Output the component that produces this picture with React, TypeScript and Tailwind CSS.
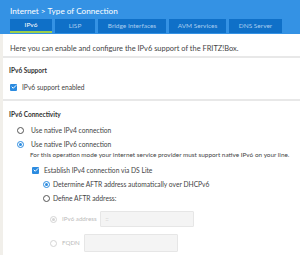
import { Check } from 'lucide-react'

const tabs = [
  { name: 'IPv6', w: 'w-[42px]', active: true },
  { name: 'LISP', w: 'w-[40px]' },
  { name: 'Bridge Interfaces', w: 'w-[68px]' },
  { name: 'AVM Services', w: 'w-[57px]' },
  { name: 'DNS Server', w: 'w-[53px]' },
]

function Checkbox() {
  return (
    <span className="w-[7px] h-[7px] rounded-[1px] bg-[#2b8be0] flex items-center justify-center shrink-0">
      <Check className="w-[6px] h-[6px] text-white" strokeWidth={4} />
    </span>
  )
}

function Radio({ on, disabled }: { on?: boolean; disabled?: boolean }) {
  return (
    <span
      className={`w-[7px] h-[7px] rounded-full border flex items-center justify-center shrink-0 ${
        disabled ? 'border-[#d4d4d4]' : on ? 'border-[#2b8be0]' : 'border-[#555]'
      }`}
    >
      {on && <span className={`w-[3px] h-[3px] rounded-full ${disabled ? 'bg-[#d4d4d4]' : 'bg-[#2b8be0]'}`} />}
    </span>
  )
}

export default function App() {
  return (
    <div className="w-[300px] h-[255px] overflow-hidden bg-[#f1efea] font-['Lato',sans-serif] text-[6.7px] text-[#444]">
      {/* Header */}
      <div className="bg-[#3492e4] h-[34px] pt-[6px]">
        <div className="px-[10px] text-white text-[8.2px] leading-[10px]">Internet &gt; Type of Connection</div>
        <div className="flex gap-[3px] pl-[10px] mt-[3px]">
          {tabs.map((t) => (
            <div
              key={t.name}
              className={`${t.w} h-[14px] bg-[#0f70c8] flex items-center justify-center text-[6.5px] ${
                t.active ? 'text-white border-b-[2px] border-[#9ccf4a]' : 'text-[#a9cdf0]'
              }`}
            >
              {t.name}
            </div>
          ))}
        </div>
      </div>

      {/* Content */}
      <div className="ml-[3px] bg-white h-[221px]">
        <div className="pl-[7px] pt-[9px] h-[24px] border-b-[2px] border-[#e8e8e8] text-[7.45px]">
          Here you can enable and configure the IPv6 support of the FRITZ!Box.
        </div>

        <div className="pl-[6px] pt-[8px] h-[43px] border-b-[2px] border-[#e8e8e8]">
          <div className="font-bold text-[#333] text-[6.5px] leading-[10px]">IPv6 Support</div>
          <div className="flex items-center gap-[5px] mt-[6px] h-[10px] pl-[1px]">
            <Checkbox />
            <span>IPv6 support enabled</span>
          </div>
        </div>

        <div className="pl-[6px] pt-[9px]">
          <div className="font-bold text-[#333] text-[6.5px] leading-[10px]">IPv6 Connectivity</div>
          <div className="mt-[3px] flex flex-col">
            <div className="pl-[8px] flex items-center gap-[7px] h-[14px]">
              <Radio />
              <span>Use native IPv4 connection</span>
            </div>
            <div className="pl-[8px] flex items-center gap-[7px] h-[14px]">
              <Radio on />
              <span>Use native IPv6 connection</span>
            </div>
            <div className="pl-[21px] h-[8px] leading-[8px] whitespace-nowrap text-[6.4px]">
              For this operation mode your internet service provider must support native IPv6 on your line.
            </div>
            <div className="pl-[23px] flex items-center gap-[5px] h-[14px] mt-[4px]">
              <Checkbox />
              <span>Establish IPv4 connection via DS Lite</span>
            </div>
            <div className="pl-[34px] flex items-center gap-[3px] h-[14px]">
              <Radio on />
              <span>Determine AFTR address automatically over DHCPv6</span>
            </div>
            <div className="pl-[34px] flex items-center gap-[3px] h-[14px]">
              <Radio />
              <span>Define AFTR address:</span>
            </div>
            <div className="pl-[41px] flex items-center h-[16px] mt-[6px] text-[#bbb] text-[6.2px]">
              <Radio on disabled />
              <span className="ml-[5px] mr-[3px]">IPv6 address</span>
              <div className="w-[94px] h-[16px] bg-[#f4f4f4] border border-[#e6e6e6] rounded-[1px] pl-[5px] flex items-center text-[#c8c8c8]">
                ::
              </div>
            </div>
            <div className="pl-[41px] flex items-center h-[18px] mt-[7px] text-[#bbb] text-[6.2px]">
              <Radio disabled />
              <span className="ml-[5px] mr-[4px]">FQDN</span>
              <div className="w-[94px] h-[18px] bg-[#f4f4f4] border border-[#e6e6e6] rounded-[1px]" />
            </div>
          </div>
        </div>
      </div>
    </div>
  )
}
